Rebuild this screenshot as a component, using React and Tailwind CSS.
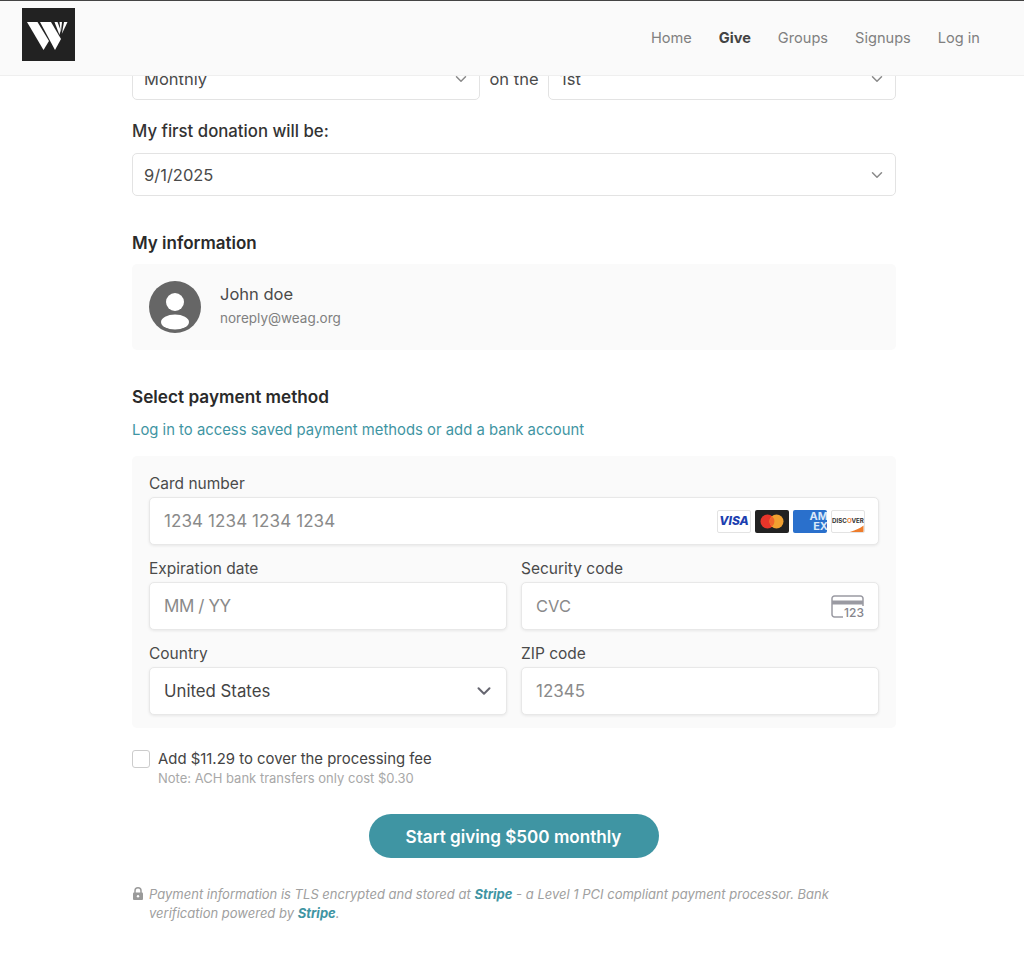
import { ChevronDown } from 'lucide-react';

const Logo = () => (
  <div className="w-[53px] h-[53px] bg-[#222222] shrink-0 -mt-[7px]">
    <svg viewBox="0 0 53 53" className="w-full h-full">
      <polygon fill="#fff" points="5,14 15.500,14 27,33 21.500,42" />
      <polygon fill="#fff" points="18,14 29,14 39,31 33,42" />
      <polygon fill="#fff" points="32.500,14 35.500,14 38.500,22 37.500,27" />
      <polygon fill="#fff" points="37.500,14 40,14 38.800,25" />
      <polygon fill="#fff" points="42,14 45.500,14 39.800,26" />
    </svg>
  </div>
);

const Select = ({ value, className = '' }) => (
  <div className={`h-[43px] flex items-center justify-between pl-[11px] pr-[9px] bg-white border border-[#e3e3e3] rounded-[5px] ${className}`}>
    <span className="pt-[2px] text-[16.500px] text-[#4a4a4a]">{value}</span>
    <ChevronDown className="w-[18px] h-[18px] text-[#8a8a8a]" strokeWidth={2} />
  </div>
);

const Field = ({ label, children }) => (
  <div className="flex-1 min-w-0">
    <div className="pt-[1px] mb-[4px] text-[15.500px] leading-[19px] text-[#4a4a4a]">{label}</div>
    <div className="h-[48px] flex items-center justify-between pl-[14px] pr-[13px] bg-white border border-[#e8e8e8] rounded-[5px] shadow-[0_1px_3px_rgba(0,0,0,0.08)]">
      {children}
    </div>
  </div>
);

const CardIcons = () => (
  <div className="flex items-center gap-[4px]">
    <div className="w-[34px] h-[23px] flex items-center justify-center bg-white border border-[#e3e3e3] rounded-[2px]">
      <span className="text-[12px] font-extrabold italic text-[#1c3fb0]">VISA</span>
    </div>
    <div className="w-[34px] h-[23px] flex items-center justify-center bg-[#222222] rounded-[2px]">
      <svg viewBox="0 0 34 23" className="w-full h-full">
        <circle cx="12.500" cy="11.500" r="7" fill="#e8352a" />
        <circle cx="21.500" cy="11.500" r="7" fill="#f0a030" />
        <path d="M17 6.200a7 7 0 0 1 0 10.600a7 7 0 0 1 0-10.600z" fill="#f0642a" />
      </svg>
    </div>
    <div className="w-[34px] h-[23px] flex justify-end items-center bg-[#2a70cc] rounded-[2px] overflow-hidden">
      <span className="text-[11px] leading-[10px] text-[#dbe8f8] font-bold text-right -mr-[1px]">AM<br />EX</span>
    </div>
    <div className="relative w-[34px] h-[23px] flex items-center justify-center bg-white border border-[#e3e3e3] rounded-[2px] overflow-hidden">
      <span className="text-[6.200px] font-bold text-[#333333]">DISC<span className="text-[#ee7d2c]">O</span>VER</span>
      <svg viewBox="0 0 34 23" className="absolute inset-0 w-full h-full">
        <path d="M19 23C26 21 30 19 34 16V23Z" fill="#ee7d2c" />
      </svg>
    </div>
  </div>
);

const CvcIcon = () => (
  <div className="relative w-[33px] h-[23px] mr-[1px]">
    <svg viewBox="0 0 33 23" className="w-full h-full" fill="none">
      <path d="M12 22H3.500A2.500 2.500 0 0 1 1 19.500V3.500A2.500 2.500 0 0 1 3.500 1H29.500A2.500 2.500 0 0 1 32 3.500V11" stroke="#9a9aa2" strokeWidth="1.500" />
      <rect x="1" y="5.500" width="31" height="4" fill="#9a9aa2" />
    </svg>
    <span className="absolute right-0 bottom-[-1px] bg-white pl-[1px] text-[12px] leading-[12px] font-medium text-[#85858c]">123</span>
  </div>
);

const LockIcon = () => (
  <svg viewBox="0 0 12 13" className="absolute left-0 top-[2px] w-[12px] h-[13px]">
    <path d="M3 6V3.800a3 3 0 0 1 6 0V6" fill="none" stroke="#9a9a9a" strokeWidth="1.500" />
    <rect x="1" y="5.500" width="10" height="7.500" rx="1" fill="#9a9a9a" />
    <circle cx="6" cy="9.200" r="1.200" fill="#fff" />
  </svg>
);

export default function App() {
  return (
    <div className="min-h-[957px] bg-white font-['Inter',sans-serif]">
      <header className="relative z-10 h-[75px] flex items-center justify-between pl-[22px] pr-[44px] bg-[#fafafa] border-t border-[#444444] shadow-[0_1px_0_#efefef]">
        <Logo />
        <nav className="flex items-center gap-[27px] pt-[1px] text-[14.600px] text-[#808080]">
          <span>Home</span>
          <span className="font-bold text-[#444444]">Give</span>
          <span>Groups</span>
          <span>Signups</span>
          <span>Log in</span>
        </nav>
      </header>

      <main className="w-[764px] ml-[132px] -mt-[18px]">
        <div className="flex items-center">
          <Select value="Monthly" className="w-[348px]" />
          <span className="w-[68px] pt-[2px] text-center text-[16.500px] text-[#4a4a4a]">on the</span>
          <Select value="1st" className="flex-1" />
        </div>

        <div className="mt-[19px] text-[16.750px] leading-[24px] font-medium text-[#333333]">My first donation will be:</div>
        <Select value="9/1/2025" className="mt-[10px]" />

        <h2 className="mt-[35px] text-[17px] leading-[24px] font-semibold text-[#2a2a2a]">My information</h2>
        <div className="mt-[9px] h-[86px] flex items-center gap-[19px] pl-[17px] bg-[#fafafa] rounded-[5px]">
          <div className="w-[52px] h-[52px] rounded-full bg-[#666666] overflow-hidden">
            <svg viewBox="0 0 52 52" className="w-full h-full">
              <circle cx="26" cy="21" r="9" fill="#fff" />
              <ellipse cx="26" cy="41" rx="14" ry="7.500" fill="#fff" />
            </svg>
          </div>
          <div className="mb-[4px]">
            <div className="text-[16.500px] leading-[24px] text-[#4a4a4a]">John doe</div>
            <div className="mt-[2px] text-[13.500px] leading-[20px] text-[#808080]">noreply@weag.org</div>
          </div>
        </div>

        <h2 className="mt-[35px] text-[17.200px] leading-[24px] font-semibold text-[#2a2a2a]">Select payment method</h2>
        <a className="block mt-[9px] text-[14.850px] leading-[24px] text-[#3f95a3]">Log in to access saved payment methods or add a bank account</a>

        <div className="mt-[14px] h-[272px] flex flex-col gap-[13px] pt-[17px] px-[17px] bg-[#fafafa] rounded-[5px]">
          <div className="flex">
            <Field label="Card number">
              <span className="pt-[2px] text-[17px] tracking-[0.1px] text-[#8a8a8a]">1234 1234 1234 1234</span>
              <CardIcons />
            </Field>
          </div>
          <div className="flex gap-[14px]">
            <Field label="Expiration date">
              <span className="pt-[2px] text-[17px] tracking-[-0.4px] text-[#8a8a8a]">MM / YY</span>
            </Field>
            <Field label="Security code">
              <span className="text-[16.500px] text-[#8a8a8a]">CVC</span>
              <CvcIcon />
            </Field>
          </div>
          <div className="flex gap-[14px]">
            <Field label="Country">
              <span className="pt-[1px] text-[16.800px] text-[#444444]">United States</span>
              <ChevronDown className="w-[22px] h-[22px] -mr-[2px] text-[#666670]" strokeWidth={2.200} />
            </Field>
            <Field label="ZIP code">
              <span className="pt-[1px] text-[17px] text-[#8a8a8a]">12345</span>
            </Field>
          </div>
        </div>

        <div className="mt-[21px] flex items-start gap-[8.500px]">
          <div className="mt-[1px] w-[17.500px] h-[18px] bg-white border border-[#cccccc] rounded-[3px]" />
          <div>
            <div className="text-[14.900px] leading-[20px] text-[#444444]">Add $11.29 to cover the processing fee</div>
            <div className="text-[13px] leading-[19px] text-[#a8a8a8]">Note: ACH bank transfers only cost $0.30</div>
          </div>
        </div>

        <div className="mt-[26px] flex justify-center pr-[1px]">
          <button className="w-[290px] h-[44px] pt-[1px] rounded-full bg-[#3f95a3] text-white text-[17.100px] font-semibold">Start giving $500 monthly</button>
        </div>

        <div className="relative mt-[27px] pl-[17px] pr-[60px] text-[13px] leading-[19px] italic text-[#a0a0a0]">
          <LockIcon />
          Payment information is TLS encrypted and stored at <b className="font-bold text-[#3f95a3]">Stripe</b> - a Level 1 PCI compliant payment processor. Bank verification powered by <b className="font-bold text-[#3f95a3]">Stripe</b>.
        </div>
      </main>
    </div>
  );
}
